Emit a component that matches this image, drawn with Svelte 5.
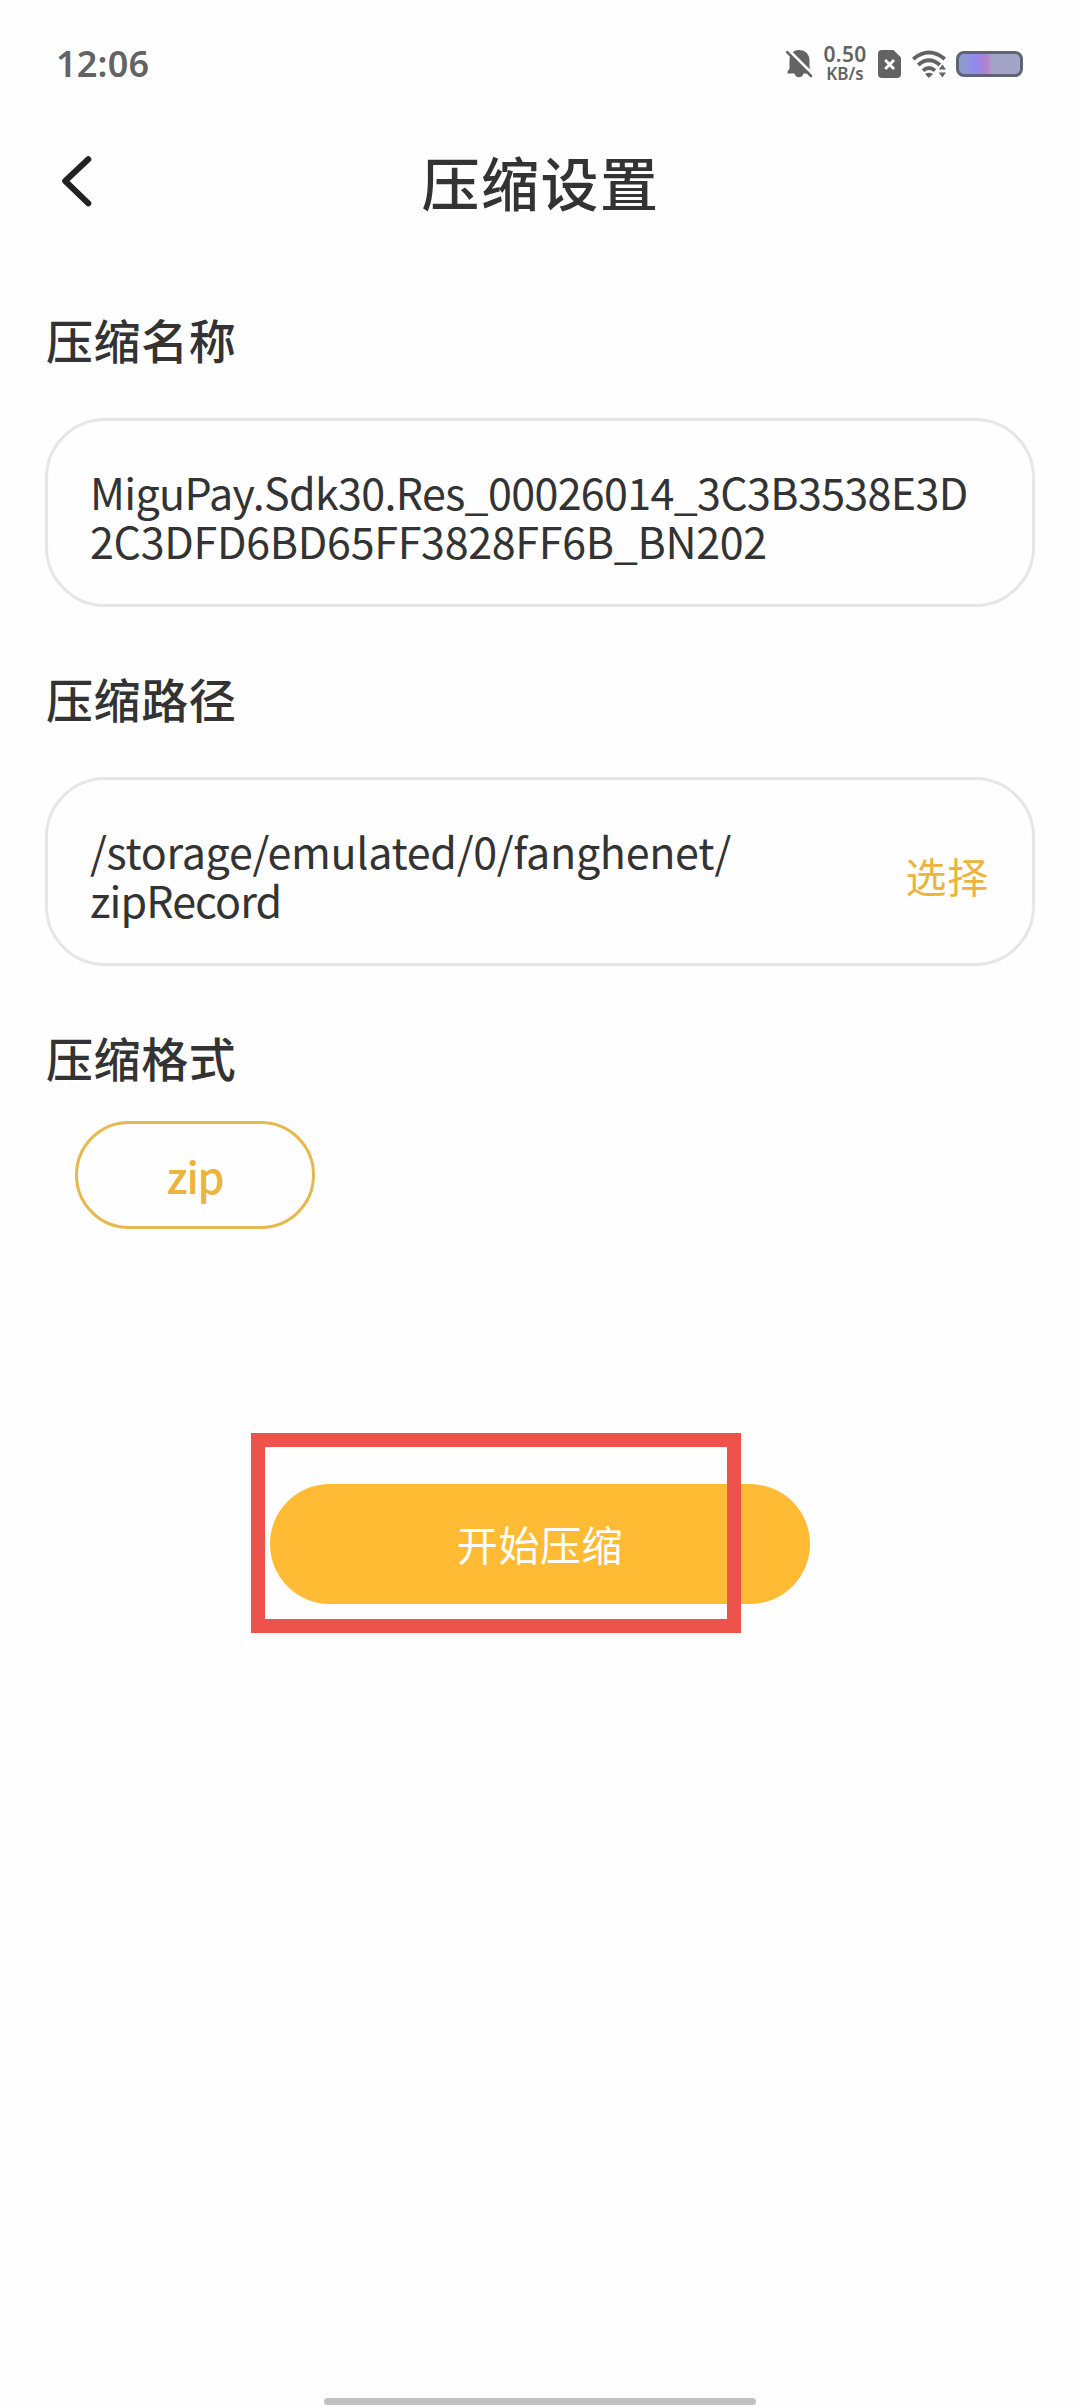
<script>
  const nameLines = [
    { text: 'MiguPay.Sdk30.Res_00026014_3C3B3538E3D', tracking: 'tight' },
    { text: '2C3DFD6BD65FF3828FF6B_BN202', tracking: 'normal' }
  ];
  const pathLines = [
    { text: '/storage/emulated/0/fanghenet/', tracking: 'normal' },
    { text: 'zipRecord', tracking: 'tightest' }
  ];
</script>

<div class="screen">
  <div class="status">
    <span class="clock">12:06</span>
    <div class="indicators">
      <svg class="bell" width="28" height="32" viewBox="0 0 28 32">
        <path d="M14 2 C20.5 2 24.5 6.5 24.5 12.5 V20 L27 25.5 H18.5 A4.6 4.6 0 0 1 9.5 25.5 H2.5 V23.5 L4.5 20.5 V12.5 C4.5 6.5 8 2 14 2 Z" fill="#636363" />
        <path d="M4 2.5 L28 26.5" stroke="#fefefe" stroke-width="3" />
        <path d="M2.2 4.2 L26 28" stroke="#636363" stroke-width="2.6" stroke-linecap="round" />
      </svg>
      <div class="speed"><span class="rate">0.50</span><span class="unit">KB/s</span></div>
      <svg class="sim" width="24" height="28" viewBox="0 0 24 28">
        <path d="M4 0 H15.5 L23 7.5 V24 Q23 28 19 28 H4 Q0 28 0 24 V4 Q0 0 4 0 Z" fill="#636363" />
        <path d="M7.2 10 L16 19 M16 10 L7.2 19" stroke="#fff" stroke-width="2.8" />
      </svg>
      <svg class="wifi" width="36" height="28" viewBox="0 0 36 28">
        <g fill="none" stroke="#636363" stroke-width="3.9">
          <path d="M1.2 9 Q17 -4 32.8 9" />
          <path d="M6.2 15 Q17 5.6 27.8 15" />
          <path d="M11 20.6 Q17 15.4 23 20.6" />
        </g>
        <path d="M13 24 Q17 21.4 21 24 L17 28 Z" fill="#636363" />
        <path d="M26.8 19.6 L30.4 14.6 L34 19.6 Z M26.8 22.4 H34 L30.4 27.4 Z" fill="#636363" stroke="#fefefe" stroke-width="2" paint-order="stroke" />
      </svg>
      <div class="battery"></div>
    </div>
  </div>

  <header>
    <svg class="back" width="34" height="54" viewBox="0 0 34 54">
      <path d="M28.3 5.3 L5.2 27 L28.3 49.3" fill="none" stroke="#222" stroke-width="6" stroke-linecap="round" stroke-linejoin="round" />
    </svg>
    <h1>压缩设置</h1>
    <div class="spacer"></div>
  </header>

  <main>
    <h2>压缩名称</h2>
    <div class="field">
      <div class="value">
        {#each nameLines as line}
          <span class={line.tracking}>{line.text}</span>
        {/each}
      </div>
    </div>

    <h2>压缩路径</h2>
    <div class="field">
      <div class="value">
        {#each pathLines as line}
          <span class={line.tracking}>{line.text}</span>
        {/each}
      </div>
      <span class="choose">选择</span>
    </div>

    <h2>压缩格式</h2>
    <div class="chip">zip</div>

    <div class="start">
      <span>开始压缩</span>
      <div class="marker"></div>
    </div>
  </main>

  <div class="home"></div>
</div>

<style>
  :global(body) {
    background: #fefefe;
  }
  .screen {
    box-sizing: border-box;
    width: 1080px;
    height: 2408px;
    background: #fefefe;
    color: #333;
    font-family: 'Noto Sans CJK SC', 'Noto Sans', sans-serif;
    display: flex;
    flex-direction: column;
    overflow: hidden;
  }
  .status {
    height: 128px;
    padding: 0 57px 0 56px;
    display: flex;
    align-items: center;
    justify-content: space-between;
    color: #636363;
    font-family: 'Noto Sans', sans-serif;
  }
  .clock {
    font-size: 36px;
    font-weight: 600;
    line-height: 50px;
    letter-spacing: 0.2px;
  }
  .indicators {
    display: flex;
    align-items: center;
  }
  .bell {
    margin-right: 10px;
  }
  .speed {
    width: 44px;
    margin-right: 11px;
    display: flex;
    flex-direction: column;
    align-items: center;
    font-weight: 600;
  }
  .rate {
    font-size: 21px;
    line-height: 19px;
    letter-spacing: 0.3px;
  }
  .unit {
    font-size: 17px;
    line-height: 19px;
  }
  .sim {
    margin-right: 10px;
  }
  .wifi {
    margin-right: 8px;
  }
  .battery {
    box-sizing: border-box;
    width: 67px;
    height: 26px;
    border: 3px solid #5f6376;
    border-radius: 8px;
    background: linear-gradient(90deg, #8f9bc8 0%, #8f97dc 16%, #8f8aee 24%, #9a85e6 32%, #ae83cf 42%, #b48fc9 50%, #a3a3c6 54%, #a3a5c6 100%);
  }
  header {
    height: 112px;
    padding: 0 60px;
    display: flex;
    align-items: center;
    justify-content: space-between;
  }
  .back {
    margin-top: -6px;
  }
  .spacer {
    width: 34px;
  }
  h1,
  h2 {
    margin: 0;
    font-weight: 500;
  }
  h1 {
    font-size: 58px;
    line-height: 90px;
    letter-spacing: 1.5px;
    margin-top: -6px;
    padding-left: 1px;
  }
  main {
    flex: 1;
    padding: 69px 45px 0;
    display: flex;
    flex-direction: column;
  }
  h2 {
    font-size: 47px;
    line-height: 60px;
    letter-spacing: 0.6px;
    padding-left: 1px;
  }
  .field {
    box-sizing: border-box;
    height: 189px;
    margin: 49px 0 61px;
    padding: 0 43px 0 42px;
    border: 3px solid #e6e6e6;
    border-radius: 60px;
    display: flex;
    align-items: center;
    justify-content: space-between;
  }
  .value {
    display: flex;
    flex-direction: column;
    align-items: flex-start;
    font-size: 43px;
    line-height: 49px;
    white-space: nowrap;
    padding-top: 6px;
  }
  .normal {
    letter-spacing: -0.3px;
  }
  .tight {
    letter-spacing: -0.65px;
  }
  .tightest {
    letter-spacing: -0.9px;
  }
  .choose {
    font-size: 41px;
    line-height: 60px;
    letter-spacing: 0.8px;
    color: #ecb43c;
    padding-top: 6px;
  }
  .chip {
    box-sizing: border-box;
    width: 240px;
    height: 108px;
    margin: 34px 0 0 30px;
    border: 3px solid #e6b94e;
    border-radius: 54px;
    color: #ecb43c;
    font-size: 43px;
    font-weight: 500;
    line-height: 102px;
    letter-spacing: -1.2px;
    text-align: center;
  }
  .start {
    position: relative;
    align-self: center;
    width: 540px;
    height: 120px;
    margin-top: 255px;
    border-radius: 60px;
    background: #ffbb33;
    color: #fff;
    font-size: 41px;
    line-height: 119px;
    letter-spacing: 0.6px;
    text-align: center;
  }
  /* Highlight frame laid over the button */
  .marker {
    position: absolute;
    box-sizing: border-box;
    left: -19px;
    top: -51px;
    width: 490px;
    height: 200px;
    border: 14px solid #ee534b;
  }
  .home {
    align-self: center;
    width: 432px;
    height: 7px;
    margin-bottom: 3px;
    border-radius: 4px;
    background: #c0c0c0;
  }
</style>
